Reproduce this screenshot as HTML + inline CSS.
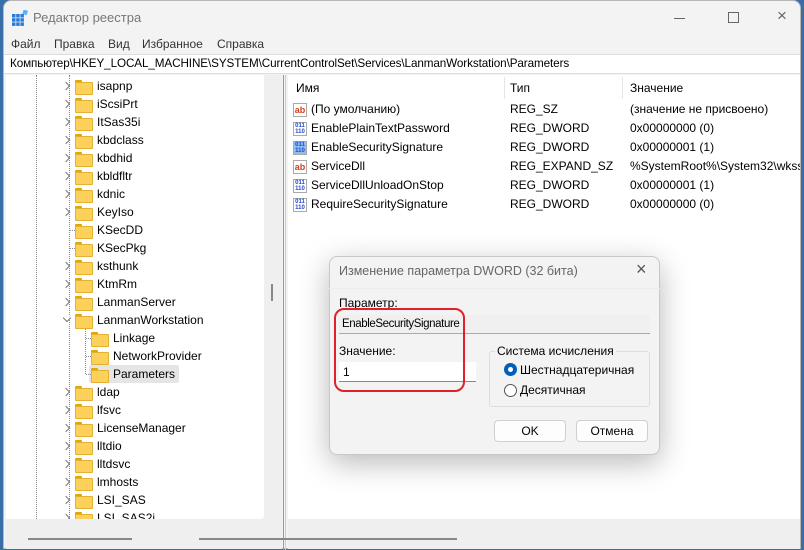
<!DOCTYPE html>
<html><head><meta charset="utf-8"><style>
*{margin:0;padding:0;box-sizing:border-box}
body{width:804px;height:549px;overflow:hidden;background:#3a6ea8;font-family:"Segoe UI","Liberation Sans","DejaVu Sans",sans-serif;font-size:12px;color:#000;position:relative}
.win{position:absolute;left:3px;top:0;width:798px;height:549px;background:#f3f3f3;border-radius:8px 8px 0 0;border:1px solid #b8b8b8}
.abs{position:absolute}
.t{position:absolute;white-space:nowrap;font-size:12px}
.fold{position:absolute;width:16px;height:13px}
.fold:before{content:"";position:absolute;left:0;top:0;width:7px;height:4px;background:#e0a800;border-radius:1px 1px 0 0}
.fold:after{content:"";position:absolute;left:0;top:2px;width:16px;height:11px;background:#fcd15a;border:1px solid #e6b030;border-radius:1px}
.chev{position:absolute;width:6px;height:6px;border-right:1.3px solid #777;border-bottom:1.3px solid #777;transform:rotate(-45deg);background:#fff}
.dotv{position:absolute;border-left:1px dotted #888;width:0}
.doth{position:absolute;border-top:1px dotted #888;height:0;width:7px}
.ic{position:absolute;width:14px;height:14px;border:1px solid #aaa;background:#fff;font:bold 9px "Liberation Sans",sans-serif;line-height:12px;text-align:center}
.ab{color:#d0401b}
.bin{color:#2346d0;font-size:6px;line-height:6px}
</style></head><body>
<div class="win">
 <svg class="abs" style="left:8px;top:9px" width="16" height="16" viewBox="0 0 16 16"><g fill="#2a7ad8"><rect x="0" y="4" width="3.5" height="3.5"/><rect x="4.2" y="4" width="3.5" height="3.5"/><rect x="8.4" y="4" width="3.5" height="3.5"/><rect x="0" y="8.2" width="3.5" height="3.5"/><rect x="4.2" y="8.2" width="3.5" height="3.5"/><rect x="8.4" y="8.2" width="3.5" height="3.5"/><rect x="0" y="12.4" width="3.5" height="3.5"/><rect x="4.2" y="12.4" width="3.5" height="3.5"/><rect x="8.4" y="12.4" width="3.5" height="3.5"/></g><rect x="11" y="0" width="4.5" height="4.5" fill="#5ab0ff" transform="rotate(20 13 2)"/></svg>
 <div class="t" style="left:29px;top:9px;color:#777;font-size:13px">Редактор реестра</div>
 <div class="abs" style="left:670px;top:17px;width:11px;border-top:1px solid #666"></div>
 <div class="abs" style="left:724px;top:11px;width:11px;height:11px;border:1px solid #666"></div>
 <div class="t" style="left:773px;top:5px;font-size:17px;color:#666">×</div>
 <div class="t" style="left:7px;top:36px;color:#333">Файл</div>
 <div class="t" style="left:50px;top:36px;color:#333">Правка</div>
 <div class="t" style="left:104px;top:36px;color:#333">Вид</div>
 <div class="t" style="left:138px;top:36px;color:#333">Избранное</div>
 <div class="t" style="left:213px;top:36px;color:#333">Справка</div>
 <div class="abs" style="left:0;top:53px;width:796px;height:20px;background:#fff;border-top:1px solid #ddd;border-bottom:1px solid #ddd"></div>
 <div class="t" style="left:6px;top:56px;font-size:11.7px;letter-spacing:-.1px">Компьютер\HKEY_LOCAL_MACHINE\SYSTEM\CurrentControlSet\Services\LanmanWorkstation\Parameters</div>
 <div class="abs" style="left:2px;top:74px;width:258px;height:444px;background:#fff;border-radius:0 0 4px 0"></div>
 <div class="abs" style="left:260px;top:74px;width:18px;height:444px;background:#efefef"></div>
 <div class="abs" style="left:267px;top:283px;width:2px;height:17px;background:#888"></div>
 <div class="abs" style="left:279px;top:74px;width:1px;height:475px;background:#999"></div>
 <div class="abs" style="left:281px;top:74px;width:1px;height:475px;background:#ccc"></div>
 <div class="dotv" style="left:32px;top:74px;height:444px"></div>
 <div class="dotv" style="left:65px;top:74px;height:444px"></div>
 <div class="dotv" style="left:81px;top:327px;height:46px"></div>
 <div id="tree"></div>
 <div class="abs" style="left:2px;top:518px;width:276px;height:30px;background:#efefef"></div>
 <div class="abs" style="left:24px;top:537px;width:104px;height:2px;background:#888"></div>
 <div class="abs" style="left:284px;top:74px;width:512px;height:444px;background:#fff"></div>
 <div class="abs" style="left:284px;top:518px;width:512px;height:30px;background:#efefef"></div>
 <div class="abs" style="left:195px;top:537px;width:258px;height:2px;background:#888"></div>
 <div class="t" style="left:292px;top:80px">Имя</div>
 <div class="abs" style="left:500px;top:76px;width:1px;height:22px;background:#e5e5e5"></div>
 <div class="t" style="left:506px;top:80px">Тип</div>
 <div class="abs" style="left:618px;top:76px;width:1px;height:22px;background:#e5e5e5"></div>
 <div class="t" style="left:626px;top:80px">Значение</div>
 <div id="list"></div>
 <div class="abs" style="left:325px;top:255px;width:331px;height:199px;background:#f3f3f3;border:1px solid #c8c8c8;border-radius:8px;box-shadow:0 8px 30px rgba(0,0,0,.28)"></div>
 <div class="t" style="left:335px;top:263px;color:#666;font-size:12.5px">Изменение параметра DWORD (32 бита)</div>
 <div class="t" style="left:632px;top:258px;color:#555;font-size:18px">×</div>
 <div class="abs" style="left:325px;top:287px;width:331px;height:1px;background:#ececec"></div>
 <div class="t" style="left:335px;top:295px">Параметр:</div>
 <div class="abs" style="left:335px;top:314px;width:311px;height:19px;background:#f0f0f0;border-bottom:1px solid #aaa"></div>
 <div class="t" style="left:338px;top:317px;font-size:11.5px;letter-spacing:-.4px">EnableSecuritySignature</div>
 <div class="t" style="left:335px;top:343px">Значение:</div>
 <div class="abs" style="left:335px;top:361px;width:137px;height:20px;background:#fff;border-bottom:1px solid #888"></div>
 <div class="t" style="left:339px;top:364px">1</div>
 <div class="abs" style="left:485px;top:350px;width:161px;height:56px;border:1px solid #ddd;border-radius:3px"></div>
 <div class="t" style="left:491px;top:343px;background:#f3f3f3;padding:0 2px">Система исчисления</div>
 <div class="abs" style="left:500px;top:362px;width:13px;height:13px;border-radius:50%;background:#005fb8"></div>
 <div class="abs" style="left:504px;top:366px;width:5px;height:5px;border-radius:50%;background:#fff"></div>
 <div class="t" style="left:516px;top:362px">Шестнадцатеричная</div>
 <div class="abs" style="left:500px;top:383px;width:13px;height:13px;border-radius:50%;border:1px solid #555;background:#fff"></div>
 <div class="t" style="left:516px;top:382px">Десятичная</div>
 <div class="abs" style="left:490px;top:419px;width:72px;height:22px;background:#fdfdfd;border:1px solid #d0d0d0;border-radius:4px;text-align:center;line-height:20px">OK</div>
 <div class="abs" style="left:572px;top:419px;width:72px;height:22px;background:#fdfdfd;border:1px solid #d0d0d0;border-radius:4px;text-align:center;line-height:20px">Отмена</div>
 <div class="abs" style="left:330px;top:307px;width:131px;height:84px;border:2px solid #e0202a;border-radius:10px"></div>
</div>
<script>
var rows=[["isapnp",1],["iScsiPrt",1],["ItSas35i",1],["kbdclass",1],["kbdhid",1],["kbldfltr",1],["kdnic",1],["KeyIso",1],["KSecDD",0],["KSecPkg",0],["ksthunk",1],["KtmRm",1],["LanmanServer",1],["LanmanWorkstation",2],["Linkage",3],["NetworkProvider",3],["Parameters",4],["ldap",1],["lfsvc",1],["LicenseManager",1],["lltdio",1],["lltdsvc",1],["lmhosts",1],["LSI_SAS",1],["LSI_SAS2i",1],["",1]];
var h="";rows.forEach(function(r,i){var y=76+i*18;var fx=r[1]>=3?87:71,tx=r[1]>=3?109:93;
if(r[1]==4)h+='<div class="abs" style="left:85px;top:'+(y)+'px;width:90px;height:18px;background:#e5e5e5;border-radius:2px"></div>';
if(r[1]==1)h+='<div class="chev" style="left:59px;top:'+(y+6)+'px"></div>';
if(r[1]==2)h+='<div class="chev" style="left:60px;top:'+(y+4)+'px;transform:rotate(45deg)"></div>';
if(r[1]==0)h+='<div class="doth" style="left:66px;top:'+(y+9)+'px"></div>';
if(r[1]>=3)h+='<div class="doth" style="left:82px;top:'+(y+9)+'px"></div>';
h+='<div class="fold" style="left:'+fx+'px;top:'+(y+3)+'px"></div><div class="t" style="left:'+tx+'px;top:'+(y+2)+'px">'+r[0]+'</div>';});
document.getElementById("tree").innerHTML=h;
var L=[["ab","(По умолчанию)","REG_SZ","(значение не присвоено)"],["b","EnablePlainTextPassword","REG_DWORD","0x00000000 (0)"],["s","EnableSecuritySignature","REG_DWORD","0x00000001 (1)"],["ab","ServiceDll","REG_EXPAND_SZ","%SystemRoot%\\System32\\wkssvc.dll"],["b","ServiceDllUnloadOnStop","REG_DWORD","0x00000001 (1)"],["b","RequireSecuritySignature","REG_DWORD","0x00000000 (0)"]];
h="";L.forEach(function(r,i){var y=101+i*19;
if(r[0]=="ab")h+='<div class="ic ab" style="left:289px;top:'+(y+1)+'px">ab</div>';
else h+='<div class="ic bin" style="left:289px;top:'+(y+1)+'px;'+(r[0]=="s"?"background:#8fbff0;":"")+'">011<br>110</div>';
h+='<div class="t" style="left:307px;top:'+y+'px">'+r[1]+'</div><div class="t" style="left:506px;top:'+y+'px">'+r[2]+'</div><div class="t" style="left:626px;top:'+y+'px;width:170px;overflow:hidden">'+r[3]+'</div>';});
document.getElementById("list").innerHTML=h;
</script>
</body></html>
